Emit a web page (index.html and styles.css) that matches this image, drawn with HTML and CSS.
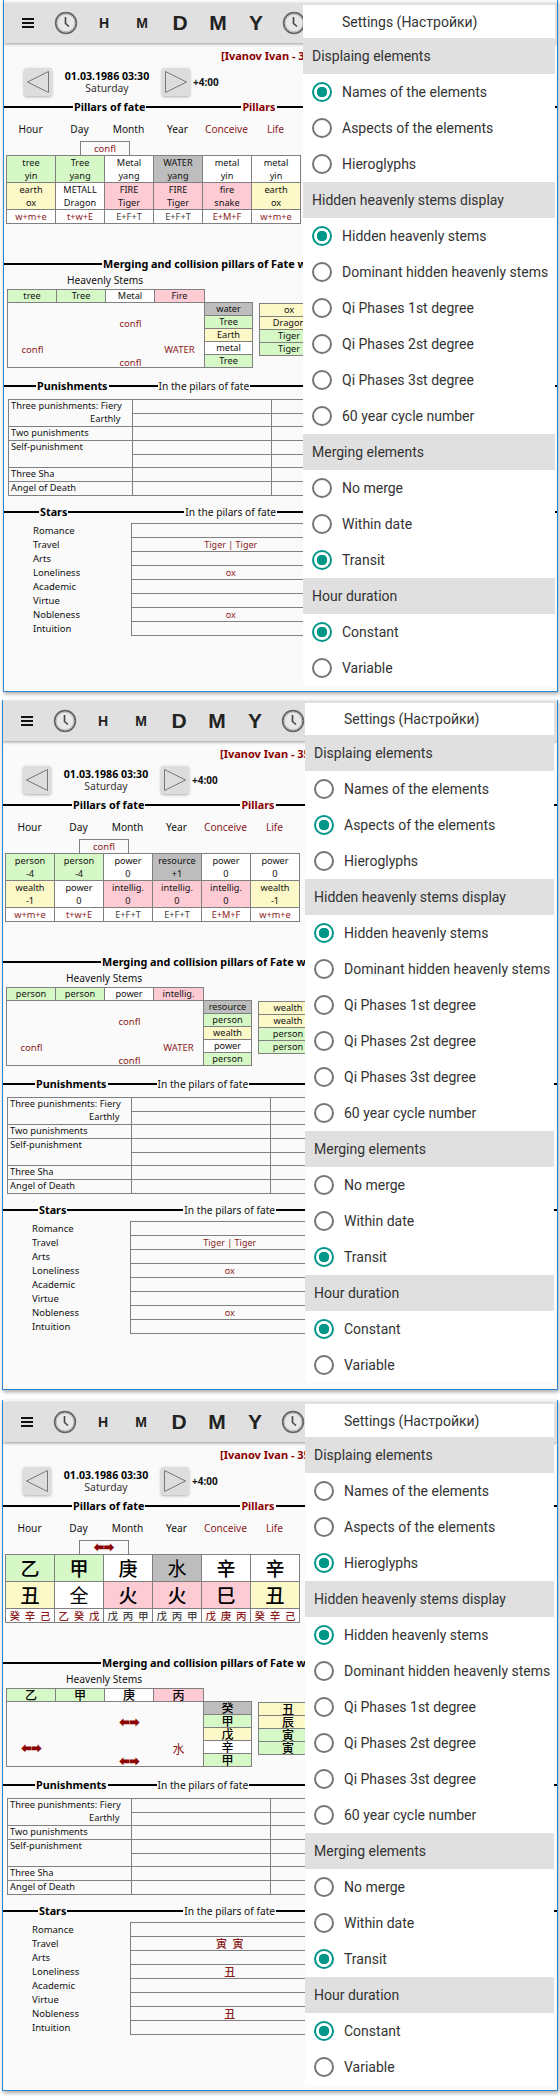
FILE: index.html
```html
<!DOCTYPE html>
<html lang="en">
<head>
<meta charset="utf-8">
<title>Pillars of fate</title>
<link rel="stylesheet" href="styles.css">
</head>
<body>

<section class="frame f1">
  <header class="bar">
    <span class="tool"><svg class="burger" viewBox="0 0 12 10"><rect y="0" width="12" height="2"/><rect y="4" width="12" height="2"/><rect y="8" width="12" height="2"/></svg></span>
    <span class="tool"><svg class="clock" viewBox="0 0 24 24"><circle cx="12" cy="12" r="10.3"/><circle class="in" cx="12" cy="12" r="8.8"/><path d="M11.5 6v6.5l3.5 3"/></svg></span>
    <span class="tool sm">H</span><span class="tool sm">M</span><span class="tool lg">D</span><span class="tool lg">M</span><span class="tool lg">Y</span>
    <span class="tool"><svg class="clock" viewBox="0 0 24 24"><circle cx="12" cy="12" r="10.3"/><circle class="in" cx="12" cy="12" r="8.8"/><path d="M11.5 6v6.5l3.5 3"/></svg></span>
  </header>
  <div class="who">[Ivanov Ivan - 35]</div>
  <div class="nav">
    <span class="btn"><svg viewBox="0 0 28 28"><path d="M24.5 3.5v21L3.5 14z"/></svg></span>
    <div class="date"><b>01.03.1986 03:30</b><span>Saturday</span></div>
    <span class="btn"><svg viewBox="0 0 28 28"><path d="M3.5 3.5v21L24.5 14z"/></svg></span>
    <b class="tz">+4:00</b>
  </div>
  <div class="rule r1"><i class="a"></i><b>Pillars of fate</b><i class="b"></i><b class="r">Pillars</b><i class="z"></i></div>
  <div class="heads"><span>Hour</span><span>Day</span><span>Month</span><span>Year</span><span class="r">Conceive</span><span class="r">Life</span></div>
  <div class="tag r">confl</div>
  <table class="pillars">
    <tr><td class="g">tree<br>yin</td><td class="g">Tree<br>yang</td><td class="w">Metal<br>yang</td><td class="s">WATER<br>yang</td><td class="w">metal<br>yin</td><td class="w">metal<br>yin</td></tr>
    <tr><td class="y">earth<br>ox</td><td class="w">METALL<br>Dragon</td><td class="p">FIRE<br>Tiger</td><td class="p">FIRE<br>Tiger</td><td class="p">fire<br>snake</td><td class="y">earth<br>ox</td></tr>
    <tr class="mix"><td class="w r">w+m+e</td><td class="w r">t+w+E</td><td class="w d">E+F+T</td><td class="w d">E+F+T</td><td class="w r">E+M+F</td><td class="w r">w+m+e</td></tr>
  </table>
  <div class="rule r2"><i class="a"></i><b>Merging and collision pillars of Fate with transit</b></div>
  <div class="stems-title">Heavenly Stems</div>
  <div class="merge">
    <div class="left">
      <div class="stems"><span class="g">tree</span><span class="g">Tree</span><span class="w">Metal</span><span class="p">Fire</span></div>
      <div class="clash r"><span class="c3 l2">confl</span><span class="c1 l4">confl</span><span class="c4 l4">WATER</span><span class="c3 l5">confl</span></div>
    </div>
    <div class="col"><span class="s">water</span><span class="g">Tree</span><span class="y">Earth</span><span class="w">metal</span><span class="g">Tree</span></div>
    <div class="col second"><span class="y">ox</span><span class="y">Dragon</span><span class="g">Tiger</span><span class="g">Tiger</span></div>
  </div>
  <div class="rule r3"><i class="a"></i><b>Punishments</b><i class="b"></i><span>In the pilars of fate</span><i class="z"></i></div>
  <table class="pun">
    <tr><td class="n" rowspan="2">Three punishments: Fiery<br><span class="sub">Earthly</span></td><td></td><td></td></tr>
    <tr><td></td><td></td></tr>
    <tr><td class="n">Two punishments</td><td></td><td></td></tr>
    <tr><td class="n" rowspan="2">Self-punishment</td><td></td><td></td></tr>
    <tr><td></td><td></td></tr>
    <tr><td class="n">Three Sha</td><td></td><td></td></tr>
    <tr><td class="n">Angel of Death</td><td></td><td></td></tr>
  </table>
  <div class="rule r4"><i class="a"></i><b>Stars</b><i class="b"></i><span>In the pilars of fate</span><i class="z"></i></div>
  <table class="stars">
    <tr><th>Romance</th><td></td></tr>
    <tr><th>Travel</th><td>Tiger | Tiger</td></tr>
    <tr><th>Arts</th><td></td></tr>
    <tr><th>Loneliness</th><td>ox</td></tr>
    <tr><th>Academic</th><td></td></tr>
    <tr><th>Virtue</th><td></td></tr>
    <tr><th>Nobleness</th><td>ox</td></tr>
    <tr><th>Intuition</th><td></td></tr>
  </table>
  <aside class="drawer">
    <div class="title">Settings (Настройки)</div>
    <div class="hd">Displaing elements</div>
    <div class="opt"><span class="radio on"></span>Names of the elements</div>
    <div class="opt"><span class="radio"></span>Aspects of the elements</div>
    <div class="opt"><span class="radio"></span>Hieroglyphs</div>
    <div class="hd">Hidden heavenly stems display</div>
    <div class="opt"><span class="radio on"></span>Hidden heavenly stems</div>
    <div class="opt"><span class="radio"></span>Dominant hidden heavenly stems</div>
    <div class="opt"><span class="radio"></span>Qi Phases 1st degree</div>
    <div class="opt"><span class="radio"></span>Qi Phases 2st degree</div>
    <div class="opt"><span class="radio"></span>Qi Phases 3st degree</div>
    <div class="opt"><span class="radio"></span>60 year cycle number</div>
    <div class="hd">Merging elements</div>
    <div class="opt"><span class="radio"></span>No merge</div>
    <div class="opt"><span class="radio"></span>Within date</div>
    <div class="opt"><span class="radio on"></span>Transit</div>
    <div class="hd">Hour duration</div>
    <div class="opt"><span class="radio on"></span>Constant</div>
    <div class="opt"><span class="radio"></span>Variable</div>
  </aside>
</section>

<section class="frame f2">
  <header class="bar">
    <span class="tool"><svg class="burger" viewBox="0 0 12 10"><rect y="0" width="12" height="2"/><rect y="4" width="12" height="2"/><rect y="8" width="12" height="2"/></svg></span>
    <span class="tool"><svg class="clock" viewBox="0 0 24 24"><circle cx="12" cy="12" r="10.3"/><circle class="in" cx="12" cy="12" r="8.8"/><path d="M11.5 6v6.5l3.5 3"/></svg></span>
    <span class="tool sm">H</span><span class="tool sm">M</span><span class="tool lg">D</span><span class="tool lg">M</span><span class="tool lg">Y</span>
    <span class="tool"><svg class="clock" viewBox="0 0 24 24"><circle cx="12" cy="12" r="10.3"/><circle class="in" cx="12" cy="12" r="8.8"/><path d="M11.5 6v6.5l3.5 3"/></svg></span>
  </header>
  <div class="who">[Ivanov Ivan - 35]</div>
  <div class="nav">
    <span class="btn"><svg viewBox="0 0 28 28"><path d="M24.5 3.5v21L3.5 14z"/></svg></span>
    <div class="date"><b>01.03.1986 03:30</b><span>Saturday</span></div>
    <span class="btn"><svg viewBox="0 0 28 28"><path d="M3.5 3.5v21L24.5 14z"/></svg></span>
    <b class="tz">+4:00</b>
  </div>
  <div class="rule r1"><i class="a"></i><b>Pillars of fate</b><i class="b"></i><b class="r">Pillars</b><i class="z"></i></div>
  <div class="heads"><span>Hour</span><span>Day</span><span>Month</span><span>Year</span><span class="r">Conceive</span><span class="r">Life</span></div>
  <div class="tag r">confl</div>
  <table class="pillars">
    <tr><td class="g">person<br>-4</td><td class="g">person<br>-4</td><td class="w">power<br>0</td><td class="s">resource<br>+1</td><td class="w">power<br>0</td><td class="w">power<br>0</td></tr>
    <tr><td class="y">wealth<br>-1</td><td class="w">power<br>0</td><td class="p">intellig.<br>0</td><td class="p">intellig.<br>0</td><td class="p">intellig.<br>0</td><td class="y">wealth<br>-1</td></tr>
    <tr class="mix"><td class="w r">w+m+e</td><td class="w r">t+w+E</td><td class="w d">E+F+T</td><td class="w d">E+F+T</td><td class="w r">E+M+F</td><td class="w r">w+m+e</td></tr>
  </table>
  <div class="rule r2"><i class="a"></i><b>Merging and collision pillars of Fate with transit</b></div>
  <div class="stems-title">Heavenly Stems</div>
  <div class="merge">
    <div class="left">
      <div class="stems"><span class="g">person</span><span class="g">person</span><span class="w">power</span><span class="p">intellig.</span></div>
      <div class="clash r"><span class="c3 l2">confl</span><span class="c1 l4">confl</span><span class="c4 l4">WATER</span><span class="c3 l5">confl</span></div>
    </div>
    <div class="col"><span class="s">resource</span><span class="g">person</span><span class="y">wealth</span><span class="w">power</span><span class="g">person</span></div>
    <div class="col second"><span class="y">wealth</span><span class="y">wealth</span><span class="g">person</span><span class="g">person</span></div>
  </div>
  <div class="rule r3"><i class="a"></i><b>Punishments</b><i class="b"></i><span>In the pilars of fate</span><i class="z"></i></div>
  <table class="pun">
    <tr><td class="n" rowspan="2">Three punishments: Fiery<br><span class="sub">Earthly</span></td><td></td><td></td></tr>
    <tr><td></td><td></td></tr>
    <tr><td class="n">Two punishments</td><td></td><td></td></tr>
    <tr><td class="n" rowspan="2">Self-punishment</td><td></td><td></td></tr>
    <tr><td></td><td></td></tr>
    <tr><td class="n">Three Sha</td><td></td><td></td></tr>
    <tr><td class="n">Angel of Death</td><td></td><td></td></tr>
  </table>
  <div class="rule r4"><i class="a"></i><b>Stars</b><i class="b"></i><span>In the pilars of fate</span><i class="z"></i></div>
  <table class="stars">
    <tr><th>Romance</th><td></td></tr>
    <tr><th>Travel</th><td>Tiger | Tiger</td></tr>
    <tr><th>Arts</th><td></td></tr>
    <tr><th>Loneliness</th><td>ox</td></tr>
    <tr><th>Academic</th><td></td></tr>
    <tr><th>Virtue</th><td></td></tr>
    <tr><th>Nobleness</th><td>ox</td></tr>
    <tr><th>Intuition</th><td></td></tr>
  </table>
  <aside class="drawer">
    <div class="title">Settings (Настройки)</div>
    <div class="hd">Displaing elements</div>
    <div class="opt"><span class="radio"></span>Names of the elements</div>
    <div class="opt"><span class="radio on"></span>Aspects of the elements</div>
    <div class="opt"><span class="radio"></span>Hieroglyphs</div>
    <div class="hd">Hidden heavenly stems display</div>
    <div class="opt"><span class="radio on"></span>Hidden heavenly stems</div>
    <div class="opt"><span class="radio"></span>Dominant hidden heavenly stems</div>
    <div class="opt"><span class="radio"></span>Qi Phases 1st degree</div>
    <div class="opt"><span class="radio"></span>Qi Phases 2st degree</div>
    <div class="opt"><span class="radio"></span>Qi Phases 3st degree</div>
    <div class="opt"><span class="radio"></span>60 year cycle number</div>
    <div class="hd">Merging elements</div>
    <div class="opt"><span class="radio"></span>No merge</div>
    <div class="opt"><span class="radio"></span>Within date</div>
    <div class="opt"><span class="radio on"></span>Transit</div>
    <div class="hd">Hour duration</div>
    <div class="opt"><span class="radio on"></span>Constant</div>
    <div class="opt"><span class="radio"></span>Variable</div>
  </aside>
</section>

<section class="frame f3">
  <header class="bar">
    <span class="tool"><svg class="burger" viewBox="0 0 12 10"><rect y="0" width="12" height="2"/><rect y="4" width="12" height="2"/><rect y="8" width="12" height="2"/></svg></span>
    <span class="tool"><svg class="clock" viewBox="0 0 24 24"><circle cx="12" cy="12" r="10.3"/><circle class="in" cx="12" cy="12" r="8.8"/><path d="M11.5 6v6.5l3.5 3"/></svg></span>
    <span class="tool sm">H</span><span class="tool sm">M</span><span class="tool lg">D</span><span class="tool lg">M</span><span class="tool lg">Y</span>
    <span class="tool"><svg class="clock" viewBox="0 0 24 24"><circle cx="12" cy="12" r="10.3"/><circle class="in" cx="12" cy="12" r="8.8"/><path d="M11.5 6v6.5l3.5 3"/></svg></span>
  </header>
  <div class="who">[Ivanov Ivan - 35]</div>
  <div class="nav">
    <span class="btn"><svg viewBox="0 0 28 28"><path d="M24.5 3.5v21L3.5 14z"/></svg></span>
    <div class="date"><b>01.03.1986 03:30</b><span>Saturday</span></div>
    <span class="btn"><svg viewBox="0 0 28 28"><path d="M3.5 3.5v21L24.5 14z"/></svg></span>
    <b class="tz">+4:00</b>
  </div>
  <div class="rule r1"><i class="a"></i><b>Pillars of fate</b><i class="b"></i><b class="r">Pillars</b><i class="z"></i></div>
  <div class="heads"><span>Hour</span><span>Day</span><span>Month</span><span>Year</span><span class="r">Conceive</span><span class="r">Life</span></div>
  <div class="tag arrows">⬅➡</div>
  <table class="pillars glyphs">
    <tr><td class="g">乙</td><td class="g">甲</td><td class="w">庚</td><td class="s thin">水</td><td class="w">辛</td><td class="w">辛</td></tr>
    <tr><td class="y">丑</td><td class="w thin">全</td><td class="p">火</td><td class="p">火</td><td class="p">巳</td><td class="y">丑</td></tr>
    <tr class="mix"><td class="w"><div class="tri r"><span>癸</span><span>辛</span><span>己</span></div></td><td class="w"><div class="tri r"><span>乙</span><span>癸</span><span>戊</span></div></td><td class="w"><div class="tri d"><span>戊</span><span>丙</span><span>甲</span></div></td><td class="w"><div class="tri d"><span>戊</span><span>丙</span><span>甲</span></div></td><td class="w"><div class="tri r"><span>戊</span><span>庚</span><span>丙</span></div></td><td class="w"><div class="tri r"><span>癸</span><span>辛</span><span>己</span></div></td></tr>
  </table>
  <div class="rule r2"><i class="a"></i><b>Merging and collision pillars of Fate with transit</b></div>
  <div class="stems-title">Heavenly Stems</div>
  <div class="merge han">
    <div class="left">
      <div class="stems"><span class="g">乙</span><span class="g">甲</span><span class="w">庚</span><span class="p">丙</span></div>
      <div class="clash r"><span class="c3 l2 arrows">⬅➡</span><span class="c1 l4 arrows">⬅➡</span><span class="c4 l4">水</span><span class="c3 l5 arrows">⬅➡</span></div>
    </div>
    <div class="col"><span class="s">癸</span><span class="g">甲</span><span class="y">戊</span><span class="w">辛</span><span class="g">甲</span></div>
    <div class="col second"><span class="y">丑</span><span class="y">辰</span><span class="g">寅</span><span class="g">寅</span></div>
  </div>
  <div class="rule r3"><i class="a"></i><b>Punishments</b><i class="b"></i><span>In the pilars of fate</span><i class="z"></i></div>
  <table class="pun">
    <tr><td class="n" rowspan="2">Three punishments: Fiery<br><span class="sub">Earthly</span></td><td></td><td></td></tr>
    <tr><td></td><td></td></tr>
    <tr><td class="n">Two punishments</td><td></td><td></td></tr>
    <tr><td class="n" rowspan="2">Self-punishment</td><td></td><td></td></tr>
    <tr><td></td><td></td></tr>
    <tr><td class="n">Three Sha</td><td></td><td></td></tr>
    <tr><td class="n">Angel of Death</td><td></td><td></td></tr>
  </table>
  <div class="rule r4"><i class="a"></i><b>Stars</b><i class="b"></i><span>In the pilars of fate</span><i class="z"></i></div>
  <table class="stars han">
    <tr><th>Romance</th><td></td></tr>
    <tr><th>Travel</th><td>寅 寅</td></tr>
    <tr><th>Arts</th><td></td></tr>
    <tr><th>Loneliness</th><td>丑</td></tr>
    <tr><th>Academic</th><td></td></tr>
    <tr><th>Virtue</th><td></td></tr>
    <tr><th>Nobleness</th><td>丑</td></tr>
    <tr><th>Intuition</th><td></td></tr>
  </table>
  <aside class="drawer">
    <div class="title">Settings (Настройки)</div>
    <div class="hd">Displaing elements</div>
    <div class="opt"><span class="radio"></span>Names of the elements</div>
    <div class="opt"><span class="radio"></span>Aspects of the elements</div>
    <div class="opt"><span class="radio on"></span>Hieroglyphs</div>
    <div class="hd">Hidden heavenly stems display</div>
    <div class="opt"><span class="radio on"></span>Hidden heavenly stems</div>
    <div class="opt"><span class="radio"></span>Dominant hidden heavenly stems</div>
    <div class="opt"><span class="radio"></span>Qi Phases 1st degree</div>
    <div class="opt"><span class="radio"></span>Qi Phases 2st degree</div>
    <div class="opt"><span class="radio"></span>Qi Phases 3st degree</div>
    <div class="opt"><span class="radio"></span>60 year cycle number</div>
    <div class="hd">Merging elements</div>
    <div class="opt"><span class="radio"></span>No merge</div>
    <div class="opt"><span class="radio"></span>Within date</div>
    <div class="opt"><span class="radio on"></span>Transit</div>
    <div class="hd">Hour duration</div>
    <div class="opt"><span class="radio on"></span>Constant</div>
    <div class="opt"><span class="radio"></span>Variable</div>
  </aside>
</section>

</body>
</html>
```

FILE: styles.css
```css
* { box-sizing: border-box; }
html, body { margin: 0; padding: 0; background: #fff; }
body {
  height: 2096px;
  overflow: hidden;
  font: 10.2px/14px "Noto Sans", "Noto Sans CJK SC", sans-serif;
  color: #111;
}
.r { color: #8b1a1a; }
.d { color: #444; }

.frame {
  position: relative;
  overflow: hidden;
  background: #fafafa;
  border: 1px solid #2a86d1;
  border-top: 0;
  box-shadow: 1px 2px 4px rgba(0, 0, 0, .35);
}
.f1 { margin-left: 3px; width: 555px; height: 692px; padding-top: 3px; }
.f2 { margin: 8px 0 0 2px; width: 556px; height: 690px; padding-top: 1px; }
.f3 { margin: 10px 0 0 2px; width: 556px; height: 691px; padding-top: 2px; }

/* toolbar */
.bar {
  display: flex;
  height: 40px;
  padding-left: 5px;
  background: #e0e0e0;
  box-shadow: 0 1px 3px rgba(0, 0, 0, .4);
}
.tool {
  flex: 0 0 38px;
  display: flex;
  align-items: center;
  justify-content: center;
  font-family: "Liberation Sans", sans-serif;
  font-weight: bold;
  color: #222;
}
.sm { font-size: 14px; }
.lg { font-size: 21px; }
.burger { width: 12px; height: 10px; fill: #111; }
.clock { width: 24px; height: 24px; fill: none; }
.clock circle { stroke: #666; stroke-width: 1.8; }
.clock circle.in { stroke: #bbb; stroke-width: 1; fill: #e8e8e8; }
.clock path { stroke: #444; stroke-width: 1.6; }

/* patient + date */
.who {
  padding: 6px 0 5px 217px;
  font-weight: bold;
  font-size: 11px;
  color: #8b0000;
  white-space: nowrap;
}
.nav { display: flex; align-items: center; height: 28px; padding-left: 20px; }
.btn {
  flex: 0 0 28px;
  height: 28px;
  background: #ddd;
  border-radius: 3px;
  box-shadow: 0 1px 3px rgba(0, 0, 0, .3);
}
.btn svg { display: block; width: 28px; height: 28px; fill: none; stroke: #777; stroke-width: 1; }
.date { flex: 0 0 110px; text-align: center; line-height: 12px; }
.date b, .date span { display: block; }
.date b { font-size: 10.6px; color: #000; }
.date span { font-size: 10.4px; color: #333; }
.tz { margin-left: 3px; font-size: 10px; }

/* section rules */
.rule { display: flex; align-items: center; height: 14px; white-space: nowrap; }
.rule i { flex: 0 0 auto; height: 2px; background: #000; }
.rule b, .rule span { flex: 0 0 auto; padding: 0 1px; }
.rule b { font-size: 10.8px; color: #000; }
.rule .z { flex: 1; }
.rule b.r { color: #8b0000; }
.r1 { margin-top: 4px; }
.r1 .a { width: 69px; }
.r1 .b { width: 95px; }
.r2 { margin-top: 33px; }
.r2 .a { width: 98px; }
.r3 { margin-top: 11px; }
.r3 .a { width: 32px; }
.r3 .b { width: 49px; }
.r4 { margin-top: 9px; }
.r4 .a { width: 35px; }
.r4 .b { width: 116px; }

/* pillar heads */
.heads { display: grid; grid-template-columns: repeat(6, 49px); margin: 8px 0 0 2px; text-align: center; }
.tag {
  width: 50px;
  height: 14px;
  margin: 5px 0 0 76px;
  border: 1px solid #808080;
  border-bottom: 0;
  background: #fafafa;
  text-align: center;
  line-height: 13px;
  font-size: 9.5px;
}
.arrows {
  font-family: "DejaVu Sans", sans-serif;
  font-size: 11.5px;
  color: #8b0000;
  -webkit-text-stroke: 1px #8b0000;
}
.tag.arrows { font-size: 11.5px; }

/* pillar table */
.g { background: #d6f8c6; }
.y { background: #fdf8c8; }
.p { background: #fdcbd4; }
.s { background: #bdbdbd; }
.w { background: #fff; }
.pillars {
  border-collapse: collapse;
  table-layout: fixed;
  width: 295px;
  margin-left: 2px;
  text-align: center;
  font-size: 9.2px;
  line-height: 13px;
}
.pillars td { width: 49px; padding: 0; border: 1px solid #808080; }
.glyphs td { font: 500 19px/26px "Noto Sans CJK SC", sans-serif; color: #000; }
.glyphs td.thin { font-weight: 400; }
.glyphs .mix td { font: 500 10.5px/13px "Noto Sans CJK SC", sans-serif; }
.tri { display: flex; justify-content: space-around; padding: 0 1px; }

/* merging block */
.stems-title { margin: 2px 0 0 63px; }
.merge { display: flex; align-items: flex-start; margin: 2px 0 0 3px; text-align: center; font-size: 9.2px; line-height: 13px; }
.left { flex: 0 0 197px; }
.stems { display: grid; grid-template-columns: repeat(4, 49px); border: 1px solid #808080; }
.stems span { height: 12px; border-right: 1px solid #808080; line-height: 12px; }
.stems span:last-child { border-right: 0; }
.clash {
  display: grid;
  grid-template-columns: repeat(4, 49px);
  grid-template-rows: repeat(5, 13px);
  height: 66px;
  margin-top: -1px;
  border: 1px solid #808080;
  font-size: 9.5px;
}
.c1 { grid-column: 1; }
.c3 { grid-column: 3; }
.c4 { grid-column: 4; }
.l2 { grid-row: 2; margin-top: 1px; }
.l4 { grid-row: 4; margin-top: 1px; }
.l5 { grid-row: 5; margin-top: 1px; }
.col { display: flex; flex-direction: column; width: 49px; margin-top: 13px; margin-left: -1px; border: 1px solid #808080; border-bottom: 0; }
.col span { height: 13px; border-bottom: 1px solid #808080; line-height: 12px; }
.second { margin-left: 6px; margin-top: 14px; width: 60px; }
.han .stems span, .han .col span { font-family: "Noto Sans CJK SC", sans-serif; font-size: 12px; font-weight: 500; color: #000; }
.han .clash .c4 { font-family: "Noto Sans CJK SC", sans-serif; font-size: 12px; }

/* punishments */
.pun {
  border-collapse: collapse;
  table-layout: fixed;
  width: 340px;
  margin: 6px 0 0 4px;
  font-size: 9.3px;
  line-height: 12.7px;
}
.pun td { height: 13.7px; padding: 0; border: 1px solid #808080; }
.pun td.n { width: 124px; padding-left: 2px; vertical-align: top; white-space: nowrap; }
.pun td:not(.n) { width: 139px; }
.sub { display: block; padding-left: 79px; }

/* stars */
.stars {
  border-collapse: collapse;
  table-layout: fixed;
  width: 323px;
  margin: 4px 0 0 4px;
  line-height: 13px;
}
.stars th { width: 123px; height: 14px; padding: 0 0 0 25px; font-size: 9.5px; font-weight: normal; text-align: left; }
.stars td { padding: 0; border: 1px solid #808080; text-align: center; color: #8b1a1a; font-size: 9px; }
.stars.han td { font: 500 11px/13px "Noto Sans CJK SC", sans-serif; word-spacing: 3px; }

/* settings drawer */
.drawer {
  position: absolute;
  background: #fff;
  font: 14px/20px Roboto, sans-serif;
  color: #333;
}
.f1 .drawer { left: 299px; top: 5px; width: 252px; }
.f2 .drawer { left: 302px; top: 3px; width: 249px; }
.f3 .drawer { left: 302px; top: 4px; width: 249px; }
.title { display: flex; align-items: center; height: 33px; padding-left: 39px; }
.f2 .title { height: 32px; }
.hd { display: flex; align-items: center; height: 36px; padding-left: 9px; background: #e0e0e0; }
.opt { display: flex; align-items: center; height: 36px; padding-left: 9px; white-space: nowrap; }
.radio {
  flex: 0 0 20px;
  height: 20px;
  margin-right: 10px;
  border: 2px solid #757575;
  border-radius: 50%;
}
.radio.on { border-color: #009688; background: radial-gradient(circle, #009688 0 5px, transparent 5.5px); }
```
